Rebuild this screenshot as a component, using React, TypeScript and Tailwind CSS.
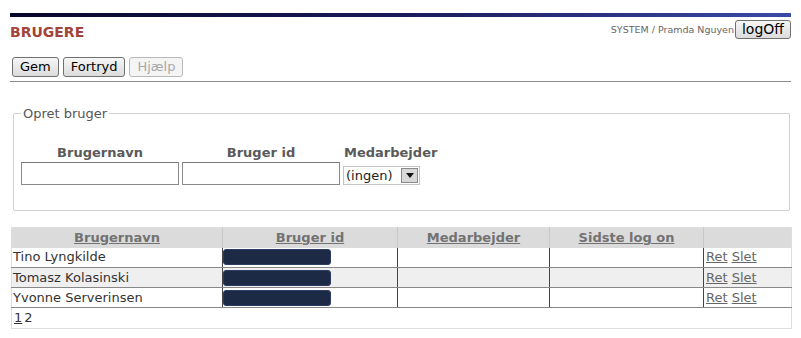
import React from "react";

const Redacted = () => (
  <div className="w-[108px] h-[16px] rounded-[3px] bg-[#1c2a46] border border-[#2b3d62]" />
);

const rows = [
  { name: "Tino Lyngkilde", bg: "bg-white" },
  { name: "Tomasz Kolasinski", bg: "bg-[#efefef]" },
  { name: "Yvonne Serverinsen", bg: "bg-white" },
];

export default function App() {
  const btn =
    "h-[20px] px-[7px] text-[13px] leading-[16px] rounded-[3px] border border-[#707070] bg-gradient-to-b from-[#f6f6f6] to-[#dcdcdc] text-black";
  return (
    <div className="w-[801px] h-[338px] bg-white font-['DejaVu_Sans',Verdana,sans-serif] text-[13px] text-[#333] overflow-hidden">
      <div className="px-[10px] pt-[13px]">
        {/* top decorative bar */}
        <div className="h-[4px] bg-gradient-to-r from-[#07072a] via-[#1a1a5a] to-[#3a4aa8]" />

        {/* header */}
        <div className="flex justify-between items-start">
          <div className="mt-[7px] text-[14px] leading-[17px] font-bold text-[#a3443a]">BRUGERE</div>
          <div className="flex items-end mt-[3px]">
            <span className="text-[9.5px] leading-[12px] text-[#666] mb-[3px] mr-[1px]">
              SYSTEM / Pramda Nguyen
            </span>
            <button className="h-[19px] px-[6px] text-[14px] leading-[15px] rounded-[3px] border border-[#707070] bg-gradient-to-b from-[#f6f6f6] to-[#dcdcdc] text-black">
              logOff
            </button>
          </div>
        </div>

        {/* toolbar */}
        <div className="mt-[16px] pb-[4px] pl-[2px] border-b border-[#8c8c8c] flex gap-[4px]">
          <button className={btn}>Gem</button>
          <button className={btn}>Fortryd</button>
          <button className="h-[20px] px-[7px] text-[13px] leading-[16px] rounded-[3px] border border-[#b8b8b8] bg-[#f4f4f4] text-[#a8a8a8]">
            Hjælp
          </button>
        </div>

        {/* fieldset */}
        <fieldset className="mt-[24px] ml-[3px] mr-[1px] border border-[#d0d0d0] rounded-[2px] pl-[7px] pb-[25px]">
          <legend className="px-[2px] text-[13px] leading-[15px] text-[#555]">Opret bruger</legend>
          <div className="flex gap-[3px] mt-[24px]">
            <div className="w-[158px] flex flex-col">
              <div className="text-center font-bold text-[#5a5a5a] leading-[16px]">Brugernavn</div>
              <input className="mt-[1px] h-[23px] w-[158px] border border-[#8a8a8a] border-t-[#7a7a7a] bg-white" />
            </div>
            <div className="w-[158px] flex flex-col">
              <div className="text-center font-bold text-[#5a5a5a] leading-[16px]">Bruger id</div>
              <input className="mt-[1px] h-[23px] w-[158px] border border-[#8a8a8a] border-t-[#7a7a7a] bg-white" />
            </div>
            <div className="flex flex-col">
              <div className="font-bold text-[#5a5a5a] leading-[16px] ml-[1px]">Medarbejder</div>
              <div className="mt-[5px] h-[19px] w-[77px] border border-[#c4c4c4] bg-white flex items-center">
                <span className="flex-1 pl-[2px] text-[13px] leading-[16px] text-[#222]">(ingen)</span>
                <span className="w-[17px] h-[15px] mr-[1px] bg-[#d8d8d8] border border-[#8a8a8a] flex items-center justify-center">
                  <svg width="8" height="5" viewBox="0 0 8 5">
                    <path d="M0 0H8L4 5Z" fill="#111" />
                  </svg>
                </span>
              </div>
            </div>
          </div>
        </fieldset>

        {/* table */}
        <table className="mt-[16px] ml-[1px] w-[780px] border-collapse border border-[#dedede] text-[13px] table-fixed">
          <colgroup>
            <col className="w-[211px]" />
            <col className="w-[175px]" />
            <col className="w-[152px]" />
            <col className="w-[154px]" />
            <col className="w-[88px]" />
          </colgroup>
          <thead>
            <tr className="h-[20px] bg-[#dcdbdc]">
              {["Brugernavn", "Bruger id", "Medarbejder", "Sidste log on", ""].map((h, i) => (
                <th
                  key={i}
                  className={`p-0 font-bold text-[#727272] underline leading-[16px] ${i > 0 ? "border-l border-[#c8c8c8]" : ""}`}
                >
                  {h}
                </th>
              ))}
            </tr>
          </thead>
          <tbody>
            {rows.map((r, i) => (
              <tr key={i} className={`h-[20px] ${r.bg}`}>
                <td className="p-0 pl-[1px] leading-[16px] border-b border-[#888] text-[#333]">{r.name}</td>
                <td className="p-0 border-b border-l border-[#888] border-l-[#444]">
                  <Redacted />
                </td>
                <td className="p-0 border-b border-l border-[#888] border-l-[#444]" />
                <td className="p-0 border-b border-l border-[#888] border-l-[#444]" />
                <td className="p-0 pl-[2px] leading-[16px] border-b border-l border-[#888] border-l-[#444] text-[#666]">
                  <span className="underline">Ret</span> <span className="underline">Slet</span>
                </td>
              </tr>
            ))}
            <tr className="h-[21px] bg-white">
              <td colSpan={5} className="p-0 pl-[2px] leading-[16px] text-[#333]">
                <span className="underline">1</span>
                <span className="ml-[2px]">2</span>
              </td>
            </tr>
          </tbody>
        </table>
      </div>
    </div>
  );
}
